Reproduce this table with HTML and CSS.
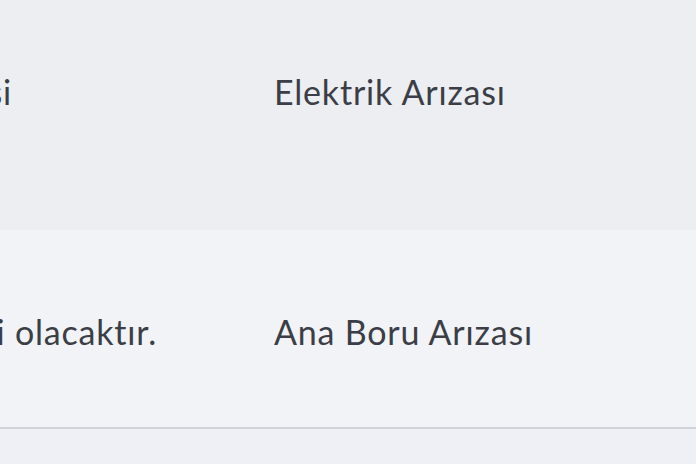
FILE: index.html
```html
<!DOCTYPE html>
<html lang="tr">
<head>
<meta charset="utf-8">
<link rel="stylesheet" href="styles.css">
</head>
<body>
<div class="table">
  <div class="row row-a">
    <div class="cell c1"><span class="clip t1">Planlı elektrik kesintisi</span></div>
    <div class="cell c2">Elektrik Arızası</div>
  </div>
  <div class="row row-b">
    <div class="cell c1"><span class="clip t2">Su kesintisi yapılacak, tamiri olacaktır.</span></div>
    <div class="cell c2">Ana Boru Arızası</div>
  </div>
  <div class="row row-c"></div>
</div>
</body>
</html>
```
FILE: styles.css
```css
html, body {
  margin: 0;
  padding: 0;
  width: 696px;
  height: 464px;
  overflow: hidden;
  background: #eef0f4;
}
.table {
  font-family: Lato, "Noto Sans", sans-serif;
  font-size: 34px;
  letter-spacing: 0.8px;
  color: #3b3e46;
  display: flex;
  flex-direction: column;
}
.row {
  display: grid;
  grid-template-columns: 274px 1fr;
  align-items: center;
}
.row-a {
  height: 230px;
  background: #eceef2;
  padding-bottom: 46px;
  box-sizing: border-box;
}
.row-b {
  background: #f1f3f6;
  padding-top: 6px;
  box-sizing: border-box;
  border-bottom: 2px solid #cfd2d7;
  height: 199px;
}
.row-c {
  height: 40px;
  background: #eef0f5;
}
.cell {
  white-space: nowrap;
  line-height: 40px;
}
.c1 {
  overflow: hidden;
  height: 40px;
  display: flex;
  justify-content: flex-end;
}
.clip {
  flex-shrink: 0;
}
.t1 { margin-right: 262px; }
.t2 { margin-right: 117px; }
```
